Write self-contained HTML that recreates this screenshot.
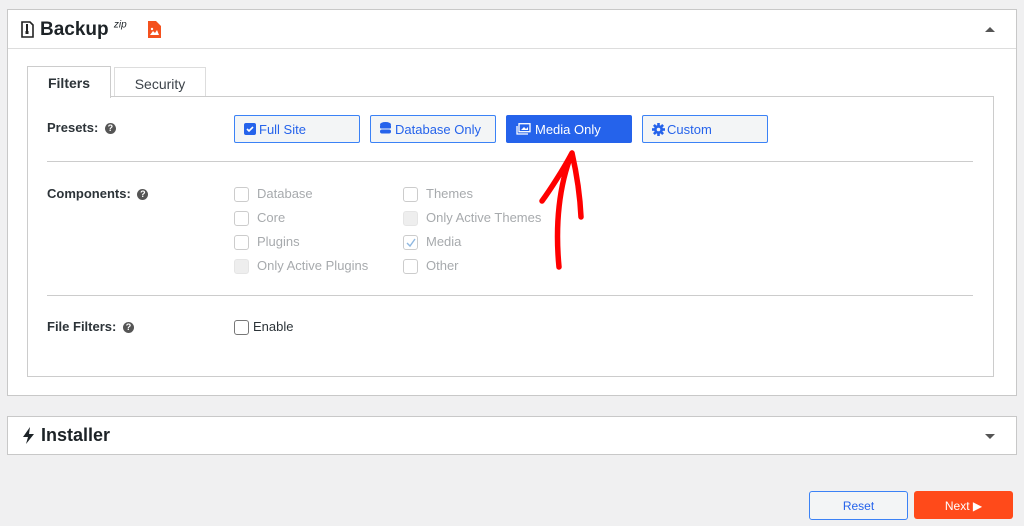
<!DOCTYPE html><html><head><style>
body{margin:0;width:1024px;height:526px;background:#f0f0f1;font-family:"Liberation Sans",sans-serif;position:relative;overflow:hidden;color:#3c434a}
.a{position:absolute}
.panel{background:#fff;border:1px solid #c8c8c8}
.btn{position:absolute;top:115px;height:26px;width:124px;border:1px solid #3b82f6;border-radius:2px;background:#f3f5f6;color:#2563eb;font-size:13px;line-height:28px;box-sizing:content-box}
.btn span{position:absolute;left:24px}
.cb{position:absolute;width:13px;height:13px;border:1px solid #ccc;border-radius:3px;background:#fff}
.cb.d{background:#eee;border-color:#e5e5e5}
.lb{position:absolute;font-size:13px;color:#a7aaad}
.lab{position:absolute;left:47px;font-size:13px;font-weight:bold;color:#2c3338}
.q{display:inline-block;width:11px;height:11px;border-radius:50%;background:#555;color:#fff;font-size:9px;line-height:11px;text-align:center;vertical-align:1px;margin-left:3px}
</style></head><body>
<div class="a panel" style="left:7px;top:9px;width:1008px;height:385px"></div>
<div class="a" style="left:8px;top:48px;width:1008px;height:1px;background:#ddd"></div>
<svg class="a" style="left:21px;top:21px" width="13" height="17" viewBox="0 0 13 17"><path d="M1 1h8l3 3v12H1z" fill="none" stroke="#222" stroke-width="1.6"/><rect x="5" y="3" width="2" height="8" fill="#222"/><rect x="4.5" y="10" width="3" height="3" fill="#222"/></svg>
<div class="a" style="left:40px;top:19px;font-size:19px;font-weight:bold;color:#1d2327">Backup <sup style="font-size:10px;font-weight:normal;font-style:italic">zip</sup></div>
<svg class="a" style="left:148px;top:21px" width="13" height="17" viewBox="0 0 13 17"><path d="M0 0h8l5 5v12H0z" fill="#f4511e"/><path d="M2 14l3-4 2 2 2-3 2 5z" fill="#fff"/><circle cx="4" cy="8" r="1.2" fill="#fff"/></svg>
<div class="a" style="left:985px;top:27px;border-left:5px solid transparent;border-right:5px solid transparent;border-bottom:5px solid #555"></div>
<div class="a" style="left:27px;top:96px;width:965px;height:279px;border:1px solid #ccc;background:#fff"></div>
<div class="a" style="left:27px;top:66px;width:82px;height:31px;border:1px solid #ccc;border-bottom:none;background:#fff;font-size:14px;font-weight:bold;text-align:center;line-height:33px;color:#2c3338">Filters</div>
<div class="a" style="left:114px;top:67px;width:90px;height:28px;border:1px solid #ddd;border-bottom:none;background:#fff;font-size:14px;text-align:center;line-height:32px;color:#3c434a">Security</div>
<div class="lab" style="top:120px">Presets: <span class="q">?</span></div>
<div class="btn" style="left:234px"><svg class="a" style="left:9px;top:7px" width="12" height="12"><rect width="12" height="12" rx="2" fill="#2563eb"/><path d="M3 6l2 2 4-4" stroke="#fff" stroke-width="1.6" fill="none"/></svg><span>Full Site</span></div>
<div class="btn" style="left:370px"><svg class="a" style="left:9px;top:6px" width="11" height="14"><ellipse cx="5.5" cy="2.5" rx="5.5" ry="2.5" fill="#2563eb"/><rect y="3" width="11" height="3.5" rx="1" fill="#2563eb"/><rect y="7.5" width="11" height="4" rx="2" fill="#2563eb"/></svg><span>Database Only</span></div>
<div class="btn" style="left:506px;background:#2563eb;color:#fff;border-color:#2563eb"><svg class="a" style="left:9px;top:7px" width="15" height="12"><rect x="3" y="0.7" width="11" height="8" fill="none" stroke="#fff" stroke-width="1.3"/><path d="M1 3v8h11" fill="none" stroke="#fff" stroke-width="1.3"/><path d="M5 7l3-3 2 2 2-2v3z" fill="#fff"/></svg><span style="left:28px">Media Only</span></div>
<div class="btn" style="left:642px"><svg class="a" style="left:9px;top:7px" width="13" height="13" viewBox="0 0 13 13"><g fill="#2563eb"><circle cx="6.5" cy="6.5" r="4.5"/><rect x="5.2" y="0" width="2.6" height="13"/><rect x="0" y="5.2" width="13" height="2.6"/><rect x="5.2" y="0" width="2.6" height="13" transform="rotate(45 6.5 6.5)"/><rect x="5.2" y="0" width="2.6" height="13" transform="rotate(-45 6.5 6.5)"/></g><circle cx="6.5" cy="6.5" r="1.8" fill="#f3f5f6"/></svg><span>Custom</span></div>
<div class="a" style="left:47px;top:161px;width:926px;height:1px;background:#ccc"></div>
<div class="lab" style="top:186px">Components: <span class="q">?</span></div>
<div class="cb" style="left:234px;top:187px"></div><div class="lb" style="left:257px;top:186px">Database</div>
<div class="cb" style="left:234px;top:211px"></div><div class="lb" style="left:257px;top:210px">Core</div>
<div class="cb" style="left:234px;top:235px"></div><div class="lb" style="left:257px;top:234px">Plugins</div>
<div class="cb d" style="left:234px;top:259px"></div><div class="lb" style="left:257px;top:258px">Only Active Plugins</div>
<div class="cb" style="left:403px;top:187px"></div><div class="lb" style="left:426px;top:186px">Themes</div>
<div class="cb d" style="left:403px;top:211px"></div><div class="lb" style="left:426px;top:210px">Only Active Themes</div>
<div class="cb" style="left:403px;top:235px"><svg class="a" style="left:1px;top:1px" width="11" height="11"><path d="M2 6l3 3 5-7" stroke="#8fb8e0" stroke-width="1.4" fill="none"/></svg></div><div class="lb" style="left:426px;top:234px">Media</div>
<div class="cb" style="left:403px;top:259px"></div><div class="lb" style="left:426px;top:258px">Other</div>
<div class="a" style="left:47px;top:295px;width:926px;height:1px;background:#ccc"></div>
<div class="lab" style="top:319px">File Filters: <span class="q">?</span></div>
<div class="cb" style="left:234px;top:320px;border-color:#777"></div><div class="a" style="left:253px;top:319px;font-size:13px;color:#2c3338">Enable</div>
<svg class="a" style="left:525px;top:145px" width="70" height="130"><path d="M34 122C30 80 34 40 47 8M47 8C38 25 25 45 17 56M47 8C52 30 55 50 56 72" stroke="#f00" stroke-width="5.5" fill="none" stroke-linecap="round"/></svg>
<div class="a panel" style="left:7px;top:416px;width:1008px;height:37px"></div>
<svg class="a" style="left:22px;top:427px" width="13" height="17" viewBox="0 0 13 17"><path d="M8 0L1 10h5l-2 7 8-10H7z" fill="#1d2327"/></svg>
<div class="a" style="left:41px;top:425px;font-size:18px;font-weight:bold;color:#1d2327">Installer</div>
<div class="a" style="left:985px;top:434px;border-left:5px solid transparent;border-right:5px solid transparent;border-top:5px solid #555"></div>
<div class="a" style="left:809px;top:491px;width:97px;height:27px;border:1px solid #3b82f6;border-radius:3px;background:#f3f5f6;color:#2563eb;font-size:12px;text-align:center;line-height:29px">Reset</div>
<div class="a" style="left:914px;top:491px;width:99px;height:28px;border-radius:3px;background:#ff4a1a;color:#fff;font-size:12px;text-align:center;line-height:30px">Next ▶</div>
</body></html>
